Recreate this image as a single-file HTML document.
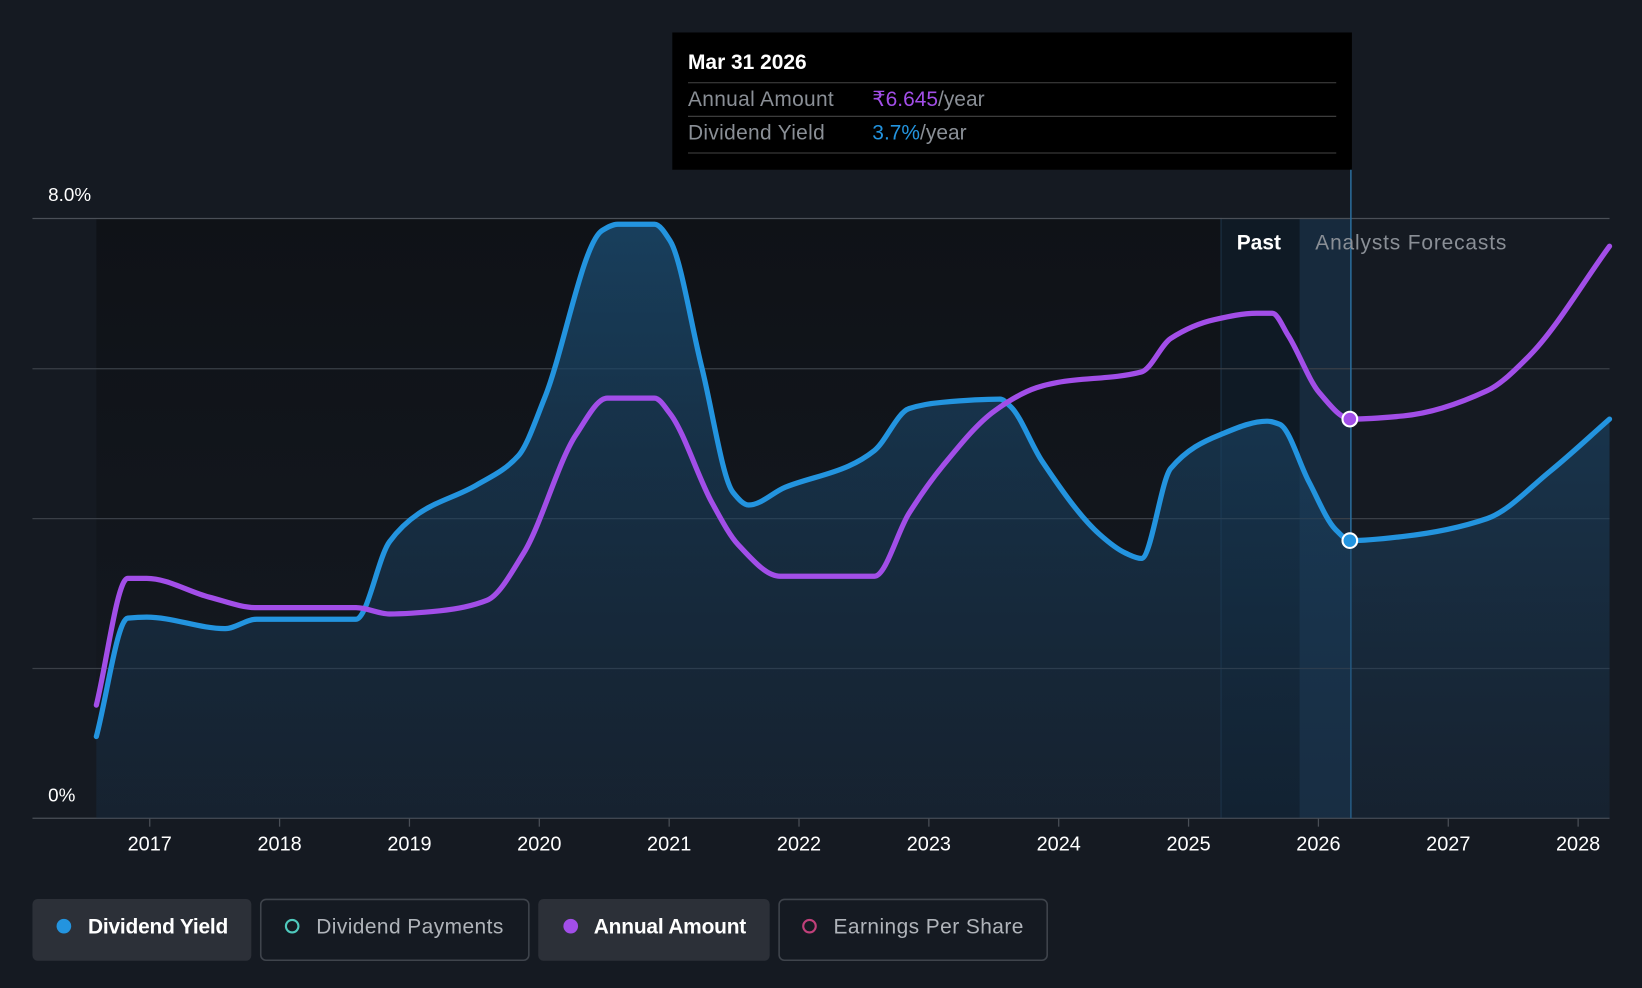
<!DOCTYPE html><html><head><style>
html,body{margin:0;padding:0;background:#151a22;overflow:hidden}
svg{display:block}
text{font-family:"Liberation Sans",sans-serif}
</style></head><body>
<svg width="1642" height="988" viewBox="0 0 1568 943" preserveAspectRatio="none" xmlns="http://www.w3.org/2000/svg">
<defs>
<linearGradient id="bg" x1="0" y1="0" x2="0" y2="1"><stop offset="0" stop-color="#0f1217"/><stop offset="1" stop-color="#151a22"/></linearGradient>
<linearGradient id="fill" x1="0" y1="0" x2="0" y2="1"><stop offset="0" stop-color="#1a4a6e" stop-opacity="0.8"/><stop offset="1" stop-color="#1a3550" stop-opacity="0.3"/></linearGradient>
</defs>
<rect width="1568" height="943" fill="#151a22"/>
<rect x="92" y="208" width="1074" height="573" fill="url(#bg)"/>
<rect x="1166" y="208" width="75" height="573" fill="#0f1a25"/>
<rect x="1241" y="208" width="49" height="573" fill="#172a3d"/>
<line x1="1166" y1="208" x2="1166" y2="781" stroke="#1d3347"/>
<g stroke="#3a3f47" stroke-width="1.2">
<line x1="31" y1="208.5" x2="1537" y2="208.5" stroke="#4a4f57"/>
<line x1="31" y1="352" x2="1537" y2="352"/>
<line x1="31" y1="495" x2="1537" y2="495"/>
<line x1="31" y1="638" x2="1537" y2="638"/>
<line x1="31" y1="781" x2="1537" y2="781" stroke="#4a4f57"/>
</g>
<line x1="1290" y1="160" x2="1290" y2="781" stroke="#2a6a98" stroke-width="1.5"/>
<path id="bfill" fill="url(#fill)" d=""/>
<path id="bline" fill="none" stroke="#2394df" stroke-width="5" stroke-linejoin="round" stroke-linecap="round" d=""/>
<path id="pline" fill="none" stroke="#a24ee8" stroke-width="5" stroke-linejoin="round" stroke-linecap="round" d=""/>
<circle cx="1289" cy="400" r="7" fill="#a24ee8" stroke="#fff" stroke-width="2"/>
<circle cx="1289" cy="516" r="7" fill="#2394df" stroke="#fff" stroke-width="2"/>
<text x="46" y="192" fill="#fff" font-size="18">8.0%</text>
<text x="46" y="765" fill="#fff" font-size="18">0%</text>
<text x="1181" y="238" fill="#fff" font-size="20" font-weight="bold">Past</text>
<text x="1256" y="238" fill="#8a8f96" font-size="20" letter-spacing="0.8">Analysts Forecasts</text>
<g fill="#fff" font-size="19" text-anchor="middle">
<text x="143" y="812">2017</text><text x="267" y="812">2018</text><text x="391" y="812">2019</text><text x="515" y="812">2020</text><text x="639" y="812">2021</text><text x="763" y="812">2022</text><text x="887" y="812">2023</text><text x="1011" y="812">2024</text><text x="1135" y="812">2025</text><text x="1259" y="812">2026</text><text x="1383" y="812">2027</text><text x="1507" y="812">2028</text>
</g>
<g stroke="#4a4f57" stroke-width="1.2">
<line x1="143" y1="781" x2="143" y2="789"/><line x1="267" y1="781" x2="267" y2="789"/><line x1="391" y1="781" x2="391" y2="789"/><line x1="515" y1="781" x2="515" y2="789"/><line x1="639" y1="781" x2="639" y2="789"/><line x1="763" y1="781" x2="763" y2="789"/><line x1="887" y1="781" x2="887" y2="789"/><line x1="1011" y1="781" x2="1011" y2="789"/><line x1="1135" y1="781" x2="1135" y2="789"/><line x1="1259" y1="781" x2="1259" y2="789"/><line x1="1383" y1="781" x2="1383" y2="789"/><line x1="1507" y1="781" x2="1507" y2="789"/>
</g>
<rect x="642" y="31" width="649" height="131" fill="#000"/>
<text x="657" y="66" fill="#fff" font-size="20" font-weight="bold">Mar 31 2026</text>
<line x1="657" y1="79" x2="1276" y2="79" stroke="#444"/>
<text x="657" y="101" fill="#8a8f96" font-size="20" letter-spacing="0.3">Annual Amount</text>
<text x="833" y="101" font-size="20"><tspan fill="#a24ee8">₹6.645</tspan><tspan fill="#8a8f96">/year</tspan></text>
<line x1="657" y1="111" x2="1276" y2="111" stroke="#444"/>
<text x="657" y="133" fill="#8a8f96" font-size="20" letter-spacing="0.3">Dividend Yield</text>
<text x="833" y="133" font-size="20"><tspan fill="#2394df">3.7%</tspan><tspan fill="#8a8f96">/year</tspan></text>
<line x1="657" y1="146" x2="1276" y2="146" stroke="#444"/>
<rect x="31" y="858" width="209" height="59" rx="5" fill="#2c3038"/>
<circle cx="61" cy="884" r="7" fill="#2394df"/>
<text x="84" y="891" fill="#fff" font-size="20" font-weight="bold" letter-spacing="-0.2">Dividend Yield</text>
<rect x="249" y="858.5" width="256" height="58" rx="5" fill="none" stroke="#3f444c" stroke-width="1.5"/>
<circle cx="279" cy="884" r="6" fill="none" stroke="#4fc9bd" stroke-width="2"/>
<text x="302" y="891" fill="#b0b4ba" font-size="20" letter-spacing="0.4">Dividend Payments</text>
<rect x="514" y="858" width="221" height="59" rx="5" fill="#2c3038"/>
<circle cx="545" cy="884" r="7" fill="#a24ee8"/>
<text x="567" y="891" fill="#fff" font-size="20" font-weight="bold" letter-spacing="-0.2">Annual Amount</text>
<rect x="744" y="858.5" width="256" height="58" rx="5" fill="none" stroke="#3f444c" stroke-width="1.5"/>
<circle cx="773" cy="884" r="6" fill="none" stroke="#c0407a" stroke-width="2"/>
<text x="796" y="891" fill="#b0b4ba" font-size="20" letter-spacing="0.4">Earnings Per Share</text>
</svg>
<script>
function P(s){return s.trim().split(/\s+/).map(function(p){return p.split(',').map(Number)});}
function mono(pts){var n=pts.length,dx=[],dl=[],m=[];for(var i=0;i<n-1;i++){dx[i]=pts[i+1][0]-pts[i][0];dl[i]=(pts[i+1][1]-pts[i][1])/dx[i];}
m[0]=dl[0];m[n-1]=dl[n-2];for(i=1;i<n-1;i++){if(dl[i-1]*dl[i]<=0)m[i]=0;else{var w1=2*dx[i]+dx[i-1],w2=dx[i]+2*dx[i-1];m[i]=(w1+w2)/(w1/dl[i-1]+w2/dl[i]);}}
var d='M'+pts[0][0]+','+pts[0][1];for(i=0;i<n-1;i++){var h=dx[i]/3;d+=' C'+(pts[i][0]+h).toFixed(1)+','+(pts[i][1]+m[i]*h).toFixed(1)+' '+(pts[i+1][0]-h).toFixed(1)+','+(pts[i+1][1]-m[i+1]*h).toFixed(1)+' '+pts[i+1][0]+','+pts[i+1][1];}return d;}
var b=P("92,703 122,590 140,589 215,600 245,591 340,591 372,517 400,490 455,463 495,435 520,380 575,220 590,214 625,214 640,230 670,350 700,470 715,482 750,465 810,445 835,430 868,390 900,384 955,381 965,388 995,440 1050,510 1075,528 1090,533 1118,447 1165,415 1210,402 1222,405 1250,460 1275,505 1290,516 1340,512 1420,495 1480,450 1537,400");
var p=P("92,673 122,552 140,552 200,570 245,580 340,580 372,586 420,583 465,573 500,528 550,415 580,380 625,380 640,395 680,480 705,520 745,550 835,550 868,490 900,445 950,392 990,370 1010,365 1090,355 1118,323 1160,305 1200,299 1215,299 1230,320 1260,375 1290,400 1340,397 1420,373 1460,340 1537,235");
var bd=mono(b);
document.getElementById('bline').setAttribute('d',bd);
document.getElementById('bfill').setAttribute('d',bd+' L1537,781 L92,781 Z');
document.getElementById('pline').setAttribute('d',mono(p));
</script>
</body></html>
